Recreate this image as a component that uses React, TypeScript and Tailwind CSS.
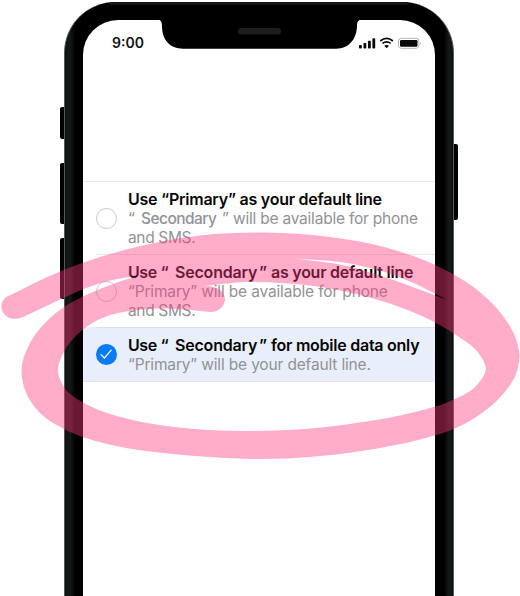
import React from "react";

type Pt = [number, number];

// Smooth curve through the points, as cubic segments whose handles
// are scaled by chord length, so uneven spacing leaves no corners.
function curve(points: Pt[]): string {
  const n = points.length;
  const f = (v: number) => v.toFixed(1);
  const dist = (a: Pt, b: Pt) => Math.hypot(b[0] - a[0], b[1] - a[1]);
  const tangent = (i: number): Pt => {
    if (i === 0 || i === n - 1) {
      const a = points[i === 0 ? 0 : n - 2];
      const b = points[i === 0 ? 1 : n - 1];
      const l = dist(a, b) || 1;
      return [(b[0] - a[0]) / l, (b[1] - a[1]) / l];
    }
    const [a, b, c] = [points[i - 1], points[i], points[i + 1]];
    const l1 = dist(a, b) || 1;
    const l2 = dist(b, c) || 1;
    const at = (k: 0 | 1) => (((b[k] - a[k]) / l1) * l2 + ((c[k] - b[k]) / l2) * l1) / (l1 + l2);
    return [at(0), at(1)];
  };
  let d = "";
  for (let i = 0; i < n - 1; i++) {
    const p = points[i];
    const q = points[i + 1];
    const h = dist(p, q) / 3;
    const s = tangent(i);
    const e = tangent(i + 1);
    d += `C${f(p[0] + s[0] * h)} ${f(p[1] + s[1] * h)} ${f(q[0] - e[0] * h)} ${f(q[1] - e[1] * h)} ${q[0]} ${q[1]}`;
  }
  return d;
}

const outer: Pt[] = [
  [9.5, 295.5], [61, 271], [133, 247.8], [200, 235.5], [265, 232.6], [330, 237], [386, 247.5],
  [434, 264.5], [474, 287.5], [500, 312], [514, 334], [519.5, 356], [516, 374], [504, 393], [482, 413], [456, 428],
  [420, 439.5], [363, 450.7], [310, 457], [263, 459], [210, 457], [150, 451.5], [105, 443.5], [64, 429], [38, 411],
  [25, 390], [21.5, 370], [30, 343], [46, 322], [64, 307], [83, 296.5], [109, 285.5], [139, 275.5],
];
const tail: Pt[] = [[139, 275.5], [110, 280.5], [83, 289.3], [55, 302], [22, 317.5]];
const inner: Pt[] = [
  [211, 312], [167, 308.5], [133, 310.5], [106, 316.5], [83, 329.5], [65, 350], [58, 371], [65, 388.5], [83, 402.5],
  [107, 413], [150, 423.5], [195, 429], [245, 431], [297, 429.5], [363, 422], [415, 412], [454, 399.5], [477, 385],
  [485.8, 369], [478, 352.5], [456, 335], [424, 317], [380, 300.5], [330, 288.5], [280, 283], [240, 282.2], [204, 286],
];
const gapTop: Pt[] = [[296, 258.5], [347, 263], [380, 270.8], [410, 281.5], [447.5, 300]];
const gapBottom: Pt[] = [[447.5, 300], [410, 286], [380, 275.6], [347, 266], [296, 258.5]];

const scribble =
  `M9.5 295.5${curve(outer)}${curve(tail)}C12 321 4 317 2 310C0 304 3 298 9.5 295.5Z` +
  `M211 312${curve(inner)}C216 285 224.5 291 225 299C225 306 219 312 211 312Z` +
  `M296 258.5${curve(gapTop)}${curve(gapBottom)}Z`;

function Radio({ checked = false }: { checked?: boolean }) {
  return (
    <div
      className={
        checked
          ? "flex size-[21px] shrink-0 items-center justify-center rounded-full bg-[#087bfb]"
          : "size-[21px] shrink-0 rounded-full border border-[#c9c9cc]"
      }
    >
      {checked && (
        <svg width="13" height="11" viewBox="0 0 13 11" fill="none" stroke="white" strokeWidth="1.2" strokeLinecap="round" strokeLinejoin="round">
          <path d="M1 5.6L4.4 9L11.2 1.2" />
        </svg>
      )}
    </div>
  );
}

const strong = "font-semibold text-[#050505]";
const soft = "text-[15.5px] text-[#929297]";

function StatusBar() {
  return (
    <div className="flex h-[161px] items-start justify-between pt-[14px] pr-[13px] pl-[29px]">
      <span className="text-[14px] leading-[18px] font-semibold text-[#111]">9:00</span>
      <svg className="mt-[3px]" width="64" height="13" viewBox="0 0 64 13" fill="none">
        <g fill="#080808">
          <rect x="1" y="8" width="2.8" height="3.5" rx=".8" />
          <rect x="5.5" y="6" width="2.8" height="5.5" rx=".8" />
          <rect x="10" y="3.7" width="2.8" height="7.8" rx=".8" />
          <rect x="14.4" y="1.3" width="2.8" height="10.2" rx=".8" />
          <path d="M26.2 8.8Q28.6 7.1 31 8.8L28.6 11.3Z" />
          <rect x="42" y="2.9" width="17.5" height="6.8" rx="1.3" />
        </g>
        <path d="M22.3 4Q28.6-1.2 34.9 4M24.5 6.4Q28.6 3.2 32.7 6.4" stroke="#080808" strokeWidth="1.7" />
        <rect x="40.5" y="1.3" width="20.3" height="10" rx="2.7" stroke="#b5b5b5" />
        <path d="M62 4.7V7.9Q63.5 6.3 62 4.7Z" fill="#999" />
      </svg>
    </div>
  );
}

export default function App() {
  return (
    <div
      className="relative h-[596px] w-[520px] overflow-hidden bg-white text-[16px] leading-[19px]"
      style={{ fontFamily: 'Inter, "Liberation Sans", sans-serif' }}
    >
      <div className="absolute top-[107px] left-[60px] h-[32px] w-2 rounded-l-[2px] bg-black" />
      <div className="absolute top-[163px] left-[60px] h-[61px] w-2 rounded-l-[2px] bg-black" />
      <div className="absolute top-[238px] left-[60px] h-[61px] w-2 rounded-l-[2px] bg-black" />
      <div className="absolute top-[144px] left-[450px] h-[76px] w-2 rounded-r-[2px] bg-black" />

      <div className="relative mt-[2px] ml-[64px] h-[680px] w-[390px] overflow-hidden rounded-t-[51px] border border-t-0 border-[#55595a] bg-[linear-gradient(90deg,#101111,#171818_5px,#000_10px,#000_379px,#171818_384px,#101111)] pt-[19px] pr-[18px] pl-[18px]">
        <div className="absolute top-0 left-[45px] h-[3px] w-[298px] bg-[#151717]" />
        <svg className="absolute top-[16px] left-[93px]" width="204" height="31" viewBox="0 0 204 31">
          <path d="M0 0H204V1.5Q199 1.5 199 7C199 21 191 30.7 178 30.7H25C12 30.7 4 22 4 8Q4 1.5 0 1.5Z" fill="black" />
          <rect x="80" y="10" width="43" height="6.5" rx="3.2" fill="#1d1d1e" />
        </svg>
        <div className="-mt-px h-[660px] overflow-hidden rounded-t-[35px] bg-white">
          <StatusBar />

          <div className="flex h-[73px] border-t border-[#e7e7e9] pt-[8px] pl-[13px]">
            <div className="mt-[18px]"><Radio /></div>
            <div className="ml-[11px] whitespace-nowrap">
              <div className={`${strong} tracking-[-0.24px]`}>Use “Primary” as your default line</div>
              <div className={`${soft} flex`}>
                <span className="w-[13px]">“</span>
                <span className="w-[81px] font-medium tracking-[-0.55px]">Secondary</span>
                <span className="w-[11px]">”</span>
                <span className="tracking-[-0.22px]">will be available for phone</span>
              </div>
              <div className={`${soft} tracking-[-0.35px]`}>and SMS.</div>
            </div>
          </div>

          <div className="relative flex h-[73px] pt-[9px] pl-[13px]">
            <div className="absolute top-0 right-0 left-[13px] h-px bg-[#e7e7e9]" />
            <div className="mt-[18px]"><Radio /></div>
            <div className="ml-[11px] whitespace-nowrap">
              <div className={`${strong} flex`}>
                <span className="w-[47px] tracking-[-0.4px]">Use “</span>
                <span className="w-[84px] tracking-[-0.2px]">Secondary</span>
                <span className="w-[12px]">”</span>
                <span className="tracking-[-0.25px]">as your default line</span>
              </div>
              <div className={`${soft} tracking-[-0.16px]`}>“Primary” will be available for phone</div>
              <div className={`${soft} tracking-[-0.35px]`}>and SMS.</div>
            </div>
          </div>

          <div className="relative flex h-[55px] border-b border-[#e2e4e9] bg-[#e9effa] pt-[9px] pl-[13px]">
            <div className="absolute top-0 right-0 left-[13px] h-px bg-[#dce0e8]" />
            <div className="mt-[8px]"><Radio checked /></div>
            <div className="ml-[11px] whitespace-nowrap">
              <div className={`${strong} flex`}>
                <span className="w-[47px] tracking-[-0.4px]">Use “</span>
                <span className="w-[84px] tracking-[-0.2px]">Secondary</span>
                <span className="w-[12px]">”</span>
                <span className="tracking-[-0.25px]">for mobile data only</span>
              </div>
              <div className={`${soft} tracking-[-0.16px]`}>“Primary” will be your default line.</div>
            </div>
          </div>
        </div>
      </div>

      <svg className="absolute top-0 left-0" width="520" height="596" viewBox="0 0 520 596">
        <path d={scribble} fill="#ff397d" fillOpacity=".41" fillRule="evenodd" />
      </svg>
    </div>
  );
}
